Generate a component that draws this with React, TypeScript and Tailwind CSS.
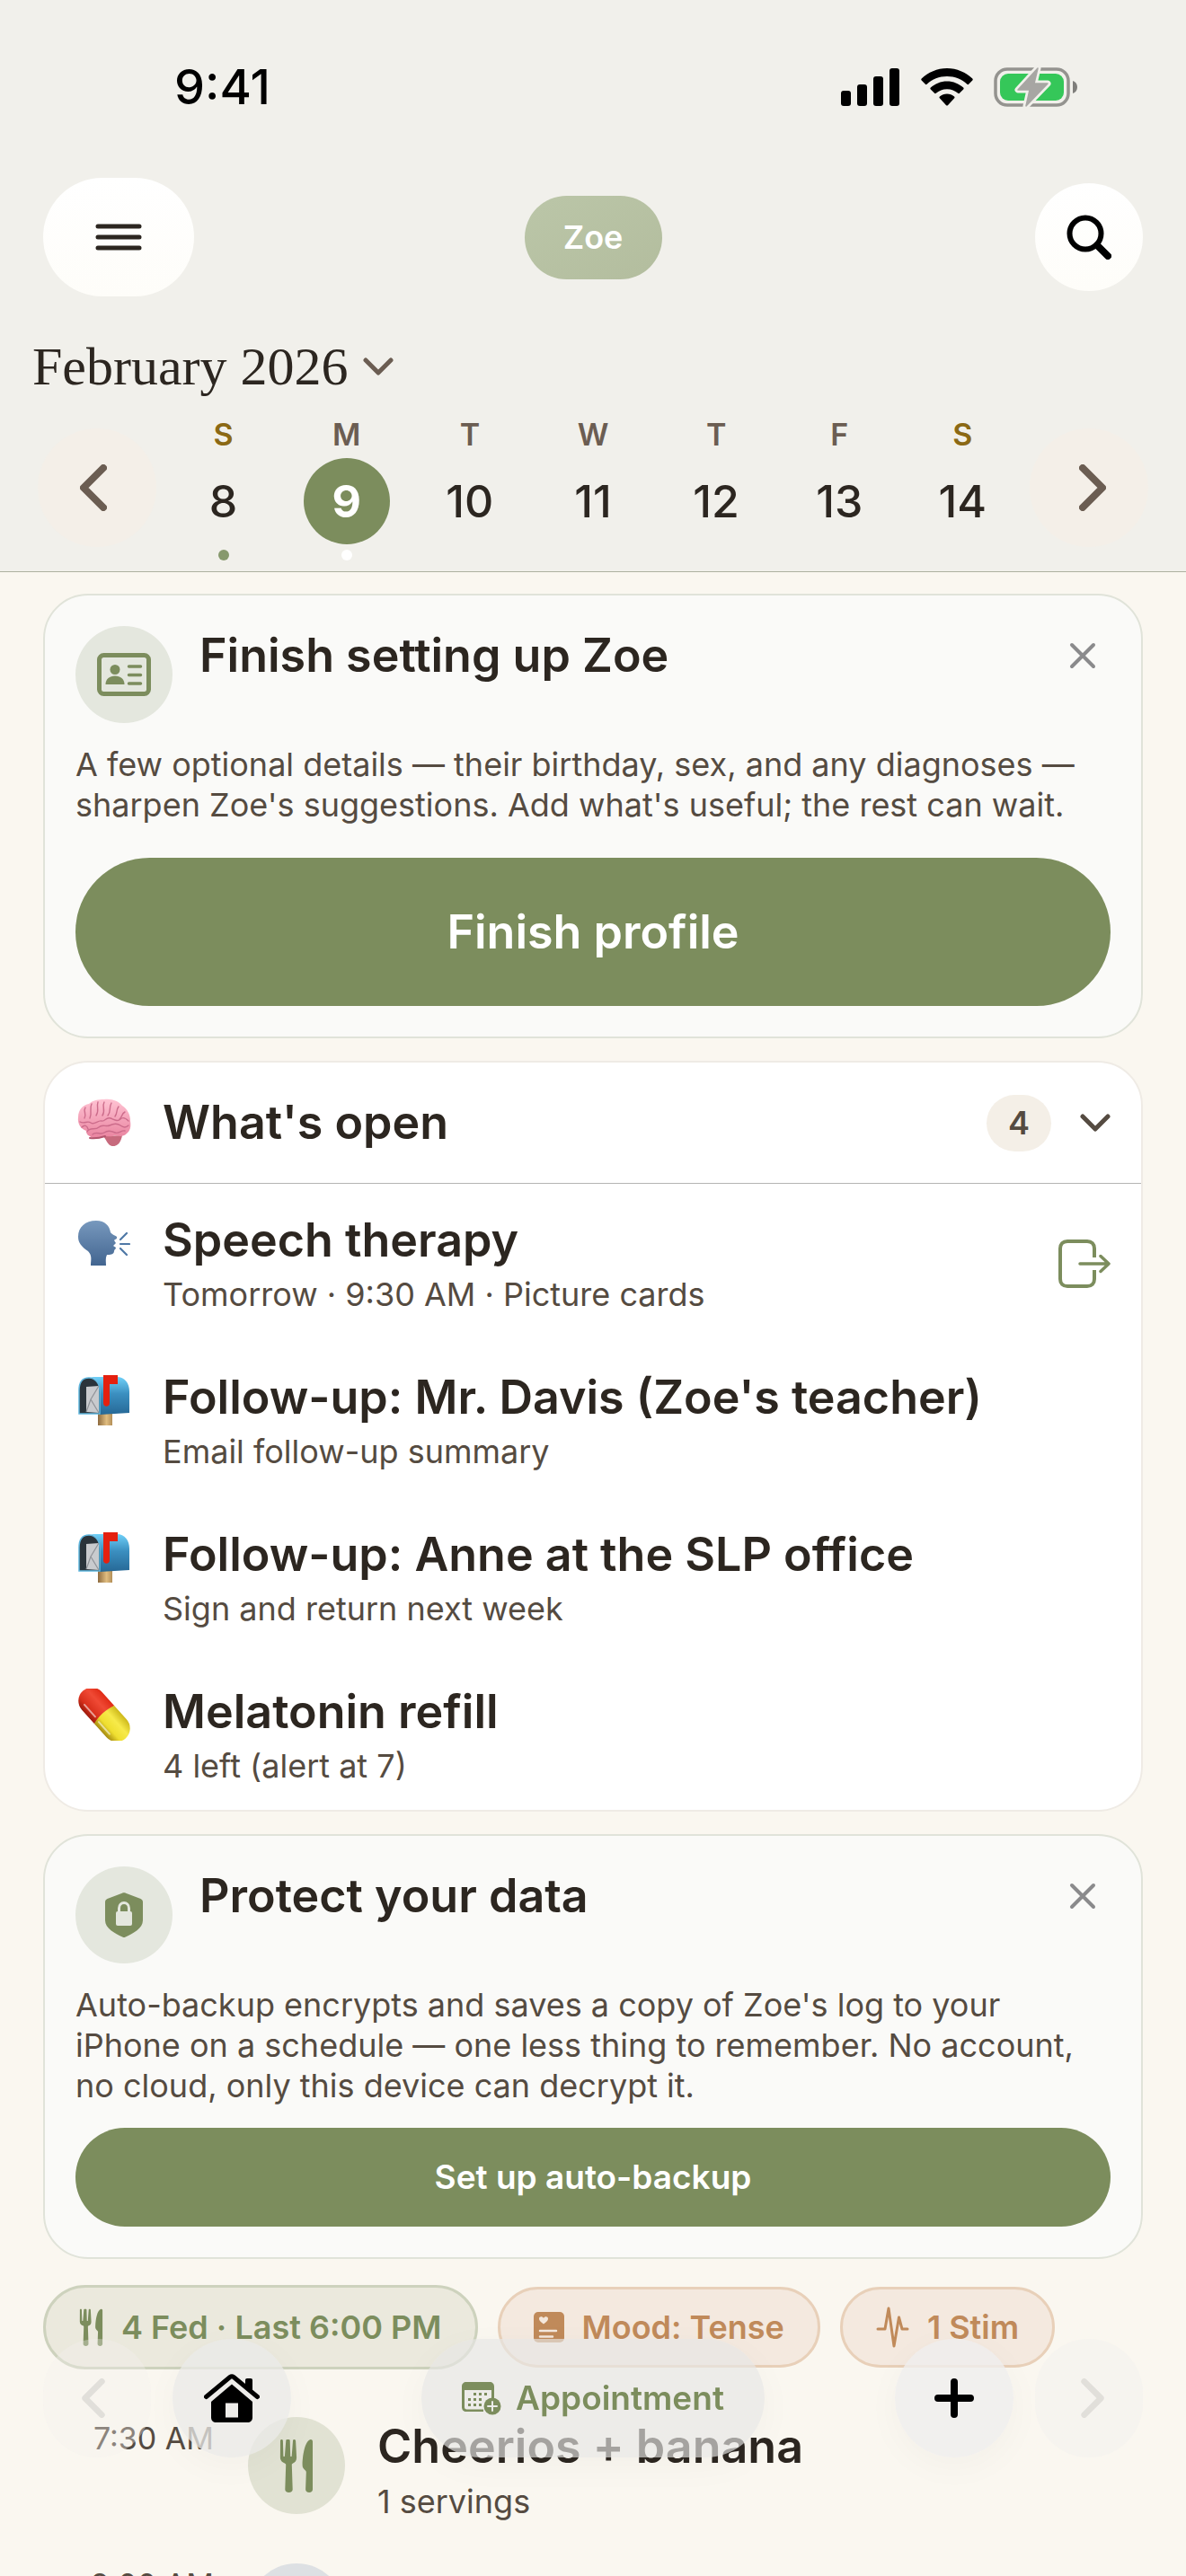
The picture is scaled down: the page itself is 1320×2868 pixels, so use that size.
import type { ReactNode } from 'react'

const days = [
  { label: 'S', date: 8, weekend: true, dot: 'bg-[#87996d]' },
  { label: 'M', date: 9, selected: true, dot: 'bg-white' },
  { label: 'T', date: 10 },
  { label: 'W', date: 11 },
  { label: 'T', date: 12 },
  { label: 'F', date: 13 },
  { label: 'S', date: 14, weekend: true },
]

const openItems = [
  { icon: <SpeakingHead />, title: 'Speech therapy', detail: 'Tomorrow · 9:30 AM · Picture cards', exit: true },
  { icon: <Mailbox />, title: "Follow-up: Mr. Davis (Zoe's teacher)", detail: 'Email follow-up summary' },
  { icon: <Mailbox />, title: 'Follow-up: Anne at the SLP office', detail: 'Sign and return next week' },
  { icon: <Pill />, title: 'Melatonin refill', detail: '4 left (alert at 7)' },
]

/* ---------- icons ---------- */

function Chevron({ d, className, width = 8 }: { d: 'left' | 'right' | 'down'; className: string; width?: number }) {
  const paths = {
    left: { box: '0 0 30 52', path: 'M26 4 4 26l22 22' },
    right: { box: '0 0 30 52', path: 'M4 4l22 22L4 48' },
    down: { box: '0 0 34 22', path: 'M3 4l14 14L31 4' },
  }
  return (
    <svg viewBox={paths[d].box} className={className} fill="none" stroke="currentColor" strokeWidth={width} strokeLinecap="round" strokeLinejoin="round">
      <path d={paths[d].path} />
    </svg>
  )
}

function Close() {
  return (
    <svg viewBox="0 0 30 30" className="h-[30px] w-[30px]" fill="none" stroke="#8a8a8c" strokeWidth="4" strokeLinecap="round">
      <path d="M3 3l24 24M27 3 3 27" />
    </svg>
  )
}

function ForkKnife({ className }: { className: string }) {
  return (
    <svg viewBox="0 0 38 60" className={className} fill="currentColor">
      <path d="M2.500 1c.9 0 1.400.6 1.400 1.500l.5 17c0 .8 1.500.8 1.500 0L7.300 2.300C7.300 1.400 7.800 1 9 1h1c1.200 0 1.700.4 1.700 1.300l.5 17.200c0 .8 1.500.8 1.500 0L15 2.500c0-.9.500-1.500 1.400-1.500 1 0 1.600.6 1.700 1.500l1 18.500c.1 3.500-1.600 5.500-4 6.500-1 .5-1.400 1-1.300 2l.9 27c0 2-1.600 3.500-4.200 3.500s-4.200-1.500-4.200-3.500l.9-27c.1-1-.3-1.500-1.300-2C3.400 26.500.8 24.500.9 21L1 2.500C1 1.600 1.500 1 2.500 1z" />
      <path d="M34.500 1c1.700-.3 2.500.8 2.500 2.500V56.500c0 2-1.500 3.500-3.900 3.500s-4-1.500-4-3.500l.7-19c0-1-.4-1.600-1.200-2.300-2.200-1.900-3.100-3.200-3-6.200C26 17 28.500 3 34.500 1z" />
    </svg>
  )
}

function StatusIcons() {
  return (
    <div className="flex items-center gap-[23px]">
      <svg viewBox="0 0 66 42" className="h-[42px] w-[66px]">
        <rect x="0" y="25" width="11" height="17" rx="3" />
        <rect x="18" y="18" width="11" height="24" rx="3" />
        <rect x="36" y="9" width="11" height="33" rx="3" />
        <rect x="54" y="0" width="11" height="42" rx="3" />
      </svg>
      <svg viewBox="0 0 58 42" className="h-[42px] w-[58px]">
        <path d="M29 0c11 0 21 4.500 28.300 11.600.6.600.6 1.300 0 1.900l-4.200 4.300c-.5.500-1.200.5-1.700 0C45.600 12.300 37.700 9 29 9S12.400 12.300 6.600 17.800c-.5.500-1.200.5-1.700 0L.7 13.500c-.6-.6-.6-1.300 0-1.900C8 4.500 18 0 29 0z" />
        <path d="M29 14.500c7 0 13.400 2.700 18.200 7.100.6.600.6 1.300 0 1.900l-4.300 4.300c-.5.500-1.100.5-1.700 0-3.200-2.900-7.500-4.600-12.200-4.600s-9 1.700-12.200 4.600c-.6.500-1.200.5-1.700 0l-4.300-4.300c-.6-.6-.6-1.300 0-1.900 4.800-4.400 11.200-7.100 18.200-7.100z" />
        <path d="M29 28.500c3.100 0 5.900 1.100 8.100 3 .6.500.6 1.200.1 1.800l-7.300 7.900c-.5.500-1.300.5-1.800 0l-7.300-7.900c-.5-.6-.5-1.300.1-1.800 2.200-1.900 5-3 8.100-3z" />
      </svg>
      <svg viewBox="0 0 94 44" className="h-11 w-[94px]">
        <rect x="2" y="2" width="81" height="40" rx="13" fill="none" stroke="#94938f" strokeWidth="3.500" />
        <rect x="7" y="7" width="71" height="30" rx="9" fill="#35c759" />
        <path d="M88 15c3 1 5 3.500 5 7s-2 6-5 7z" fill="#7f7e7b" />
        <path d="M49 1 27 25h13L36 43l24-25H45z" fill="#a7a6a3" stroke="#f1f0eb" strokeWidth="7" strokeLinejoin="round" />
        <path d="M49 1 27 25h13L36 43l24-25H45z" fill="#a7a6a3" stroke="#a7a6a3" strokeWidth="1.500" strokeLinejoin="round" />
      </svg>
    </div>
  )
}

function IdCard() {
  return (
    <svg viewBox="0 0 60 48" className="h-12 w-[60px]" fill="none" stroke="#7c8d5d">
      <rect x="2.500" y="2.500" width="55" height="43" rx="5" strokeWidth="5" />
      <circle cx="20" cy="18.500" r="5.500" fill="#7c8d5d" stroke="none" />
      <path d="M9.500 35c0-6 4.500-9.500 10.500-9.500S30.500 29 30.500 35z" fill="#7c8d5d" stroke="none" />
      <path d="M35.500 15h13M35.500 24.500h13M35.500 34h13" strokeWidth="3.500" strokeLinecap="round" />
    </svg>
  )
}

function ShieldLock() {
  return (
    <svg viewBox="0 0 42 50" className="h-[50px] w-[42px]">
      <path d="M19 .7c1.300-.6 2.700-.6 4 0L39.500 7c1.600.7 2.500 2 2.500 3.700V31c0 9-11 14.500-19.200 18.600-1.200.6-2.400.6-3.600 0C11 45.500 0 40 0 31V10.700C0 9 .9 7.700 2.500 7z" fill="#7c8d5d" />
      <rect x="12" y="21" width="18" height="16" rx="2" fill="#e4e7de" />
      <path d="M15.500 22v-4.500c0-8 11-8 11 0V22" fill="none" stroke="#e4e7de" strokeWidth="3" />
    </svg>
  )
}

function Brain() {
  return (
    <svg viewBox="0 0 64 54" className="h-[54px] w-16">
      <defs>
        <linearGradient id="brain" x1="0" y1="0" x2="0" y2="1">
          <stop offset="0" stopColor="#ffc3d3" />
          <stop offset="1" stopColor="#e9839f" />
        </linearGradient>
      </defs>
      <path d="M31 42c4 5 5 11 11 11s9-6 10-12z" fill="#c76a7d" />
      <path d="M32 1c9-1 16 2 20 7 6 4 9 10 9 17 1 6 0 11-4 14-4 4-9 3-13 2-4 2-7 1-11 1-6 3-13 4-17 0-3-1-4-3-4-6-6-2-10-8-9-15C3 12 9 7 15 6c4-4 10-5 17-5z" fill="url(#brain)" />
      <path d="M16 44c6 1 11 0 17-2" fill="none" stroke="#b3566f" strokeWidth="2" strokeLinecap="round" />
      <g fill="none" stroke="#cc6c8b" strokeWidth="1.400" strokeLinecap="round">
        <path d="M11 10c-3 5 2 7-1 12M18 6c-3 6 1 9-2 16M25 4c-2 6 2 9-2 15M32 4c-3 5 2 9-2 15M40 5c-3 5 0 9-4 14M48 9c-3 4-1 7-4 11M55 15c-4 2-3 6-6 8" />
        <path d="M5 26c5 3 8-2 12 1s8-3 12-2 5-5 10-3 8 4 11 1 6-1 9 2" />
        <path d="M7 32c3-3 6-2 7 2M13 37c3-6 9-1 13-5s8 0 12-2 8-3 12 0 7 2 9 0M19 40c4-4 9 1 13-2s8-2 12 0 7-3 11-2" />
      </g>
    </svg>
  )
}

function SpeakingHead() {
  return (
    <svg viewBox="0 0 58 50" className="h-[50px] w-[58px]">
      <defs>
        <linearGradient id="head" x1="0" y1="0" x2="0" y2="1">
          <stop offset="0" stopColor="#7798bd" />
          <stop offset="1" stopColor="#426590" />
        </linearGradient>
      </defs>
      <path d="M20 0c10 0 15 6 16 13 1 2 6 4 7 5 1 2-2 3-3 4l2 3-3 3 3 2c0 2-2 2-2 4 0 4-5 4-8 4-2 4-1 8-1 12H14c0-6 2-11-3-16C4 29 0 25 0 18 0 7 8 0 20 0z" fill="url(#head)" />
      <path d="M47 21l7-7M47 26h10M47 31l7 7" stroke="#4f78a6" strokeWidth="2.200" strokeLinecap="round" />
    </svg>
  )
}

function Mailbox() {
  return (
    <svg viewBox="0 0 58 56" className="h-14 w-[58px]">
      <defs>
        <linearGradient id="box" x1="0" y1="0" x2="0" y2="1">
          <stop offset="0" stopColor="#6fd0f8" />
          <stop offset=".45" stopColor="#3b8fc0" />
          <stop offset="1" stopColor="#266896" />
        </linearGradient>
        <linearGradient id="post" x1="0" y1="0" x2="1" y2="0">
          <stop offset="0" stopColor="#8d6a3e" />
          <stop offset=".6" stopColor="#e0bd80" />
          <stop offset="1" stopColor="#b38f58" />
        </linearGradient>
      </defs>
      <path d="M22 40h16v16H22z" fill="url(#post)" />
      <path d="M12 2h31c9 0 14 7 14 16v24l-33 2V18C24 9 20 2 12 2z" fill="url(#box)" />
      <path d="M1 43V17C1 8 5 3 12 3s12 6 12 15v25z" fill="#2b343b" stroke="#5eb5dd" strokeWidth="1.500" />
      <path d="M9 13l14-1v30l-14-1z" fill="#c9cbce" />
      <path d="M23 12 14 27l9 15M9 41l5-14" fill="none" stroke="#909398" strokeWidth="1.200" />
      <path d="M28 0h16v10h-9v21c0 5-7 5-7 0z" fill="#e4200f" />
    </svg>
  )
}

function Pill() {
  return (
    <svg viewBox="0 0 58 58" className="h-[58px] w-[58px]">
      <defs>
        <linearGradient id="red" x1="0" y1="0" x2="0" y2="1">
          <stop offset="0" stopColor="#e02b16" />
          <stop offset=".35" stopColor="#f04a35" />
          <stop offset=".75" stopColor="#d9301c" />
          <stop offset="1" stopColor="#9c1a0c" />
        </linearGradient>
        <linearGradient id="yellow" x1="0" y1="0" x2="0" y2="1">
          <stop offset="0" stopColor="#cdb81a" />
          <stop offset=".35" stopColor="#f7ea4a" />
          <stop offset=".7" stopColor="#efdf30" />
          <stop offset="1" stopColor="#a58a10" />
        </linearGradient>
      </defs>
      <g transform="rotate(48 29 29)">
        <path d="M29 14H8.500a15 15 0 0 0 0 30H29z" fill="url(#red)" />
        <path d="M29 14h20.500a15 15 0 0 1 0 30H29c-3-8-3-22 0-30z" fill="url(#yellow)" />
        <path d="M6 38h18M31 39h18" stroke="#fff" strokeOpacity=".55" strokeWidth="2" strokeLinecap="round" />
      </g>
    </svg>
  )
}

function Exit() {
  return (
    <svg viewBox="0 0 58 54" className="h-[54px] w-[58px]" fill="none" stroke="#7c8d5d" strokeWidth="4" strokeLinecap="round" strokeLinejoin="round">
      <path d="M40 20V10c0-5-3-8-8-8H10c-5 0-8 3-8 8v34c0 5 3 8 8 8h22c5 0 8-3 8-8V34" strokeLinecap="butt" />
      <path d="M24 27h31M47 18.500l9 8.500-9 8.500" strokeWidth="3.500" />
    </svg>
  )
}

function MoodCard() {
  return (
    <svg viewBox="0 0 34 34" className="h-[34px] w-[34px]">
      <rect width="34" height="34" rx="5" fill="#c08a5a" />
      <path d="M11 13.500C7.500 11 6 9.500 6 7.500 6 4.800 9.500 4.300 11 6.800c1.500-2.500 5-2 5 .7 0 2-1.500 3.500-5 6z" fill="#f4e8dd" />
      <path d="M7 21h18M7 27.500h14" stroke="#f4e8dd" strokeWidth="2.500" strokeLinecap="round" />
    </svg>
  )
}

function Pulse() {
  return (
    <svg viewBox="0 0 37 46" className="h-[46px] w-[37px]" fill="none" stroke="#c08a5a" strokeWidth="3" strokeLinecap="round" strokeLinejoin="round">
      <path d="M2 25h8L14 2l6 42 5.500-32L29 25h6" />
    </svg>
  )
}

function CalendarPlus() {
  return (
    <svg viewBox="0 0 44 37" className="h-[37px] w-11">
      <path d="M5 0h26c3 0 5 2 5 5v13h-3V9H3v19c0 1.500.8 2.500 2.500 2.500H24V33H5c-3 0-5-2-5-5V5c0-3 2-5 5-5z" fill="#7c8d5d" />
      <g fill="#7c8d5d">
        <path d="M13 12h3v3h-3zM19 12h3v3h-3zM25 12h3v3h-3zM7 18h3v3H7zM13 18h3v3h-3zM19 18h3v3h-3zM7 24h3v3H7zM13 24h3v3h-3zM19 24h3v3h-3z" />
        <circle cx="34" cy="27" r="9.500" />
      </g>
      <path d="M34 22v10M29 27h10" stroke="#ececea" strokeWidth="2" strokeLinecap="round" />
    </svg>
  )
}

function House() {
  return (
    <svg viewBox="0 0 62 54" className="h-[54px] w-[62px]">
      <path d="M2.500 25.500 29 3.500c1.300-1 2.700-1 4 0l26.500 22" fill="none" stroke="#000" strokeWidth="5" strokeLinecap="round" strokeLinejoin="round" />
      <path d="M46 7c0-1.300.7-2 2-2h4c1.300 0 2 .7 2 2v14l-8-7z" />
      <path fillRule="evenodd" d="M31 11.500 54 31v17c0 4-2 6-6 6H14c-4 0-6-2-6-6V31zM24 32.500v16h14v-16z" />
    </svg>
  )
}

/* ---------- pieces ---------- */

type PromptProps = { icon: ReactNode; title: string; children: ReactNode; action: string; large?: boolean }

function PromptCard({ icon, title, children, action, large }: PromptProps) {
  return (
    <section className="rounded-[50px] border-2 border-[#e0e3d9] bg-[#fafaf8] px-[34px] py-[34px]">
      <div className="flex items-start">
        <div className="flex h-[108px] w-[108px] shrink-0 items-center justify-center rounded-full bg-[#e4e7de]">{icon}</div>
        <h2 className="ml-[30px] flex-1 text-[52px] leading-[66px] font-semibold">{title}</h2>
        <button aria-label="Dismiss" className="mr-4 flex h-[66px] items-center">
          <Close />
        </button>
      </div>
      <p className="mt-6 text-[36px] leading-[45px] text-[#554b41]">{children}</p>
      {large ? (
        <button className="mt-9 h-[165px] w-full rounded-full bg-[#7c8d5d] text-[52px] font-semibold text-white">{action}</button>
      ) : (
        <button className="mt-6 h-[110px] w-full rounded-full bg-[#7c8d5d] text-[37px] font-semibold text-white">{action}</button>
      )}
    </section>
  )
}

function TimelineRow({ time, icon, tint, title, detail }: { time: string; icon?: ReactNode; tint: string; title?: string; detail?: string }) {
  return (
    <li className="flex h-[163px] items-start">
      <time className="w-[190px] text-right text-[34px] leading-[48px] text-[#554b41]">{time}</time>
      <div className={`ml-[38px] flex h-[108px] w-[108px] shrink-0 items-center justify-center rounded-full ${tint}`}>{icon}</div>
      <div className="ml-9">
        <h3 className="text-[52px] leading-[66px] font-semibold">{title}</h3>
        <p className="text-[36px] leading-[56px] text-[#554b41]">{detail}</p>
      </div>
    </li>
  )
}

export default function App() {
  return (
    <div className="flex h-screen flex-col overflow-hidden bg-[#faf7f0] font-['Inter',sans-serif] text-[#2c2620]">
      <header className="shrink-0 border-b border-[#adb1a0] bg-[#f1f0eb]">
        <div className="flex h-[198px] items-start justify-between pt-[64px] pr-[120px] pl-[194px] text-black">
          <span className="text-[54px] leading-[66px] font-medium">9:41</span>
          <div className="flex h-[66px] items-center">
            <StatusIcons />
          </div>
        </div>

        <div className="grid grid-cols-3 items-center px-12">
          <button aria-label="Menu" className="flex h-[132px] w-[168px] items-center justify-center rounded-[66px] bg-linear-to-b from-white to-[#fefdf9]">
            <svg viewBox="0 0 52 36" className="h-9 w-[52px]" stroke="#2c2620" strokeWidth="5" strokeLinecap="round">
              <path d="M3 6h46M3 18h46M3 30h46" />
            </svg>
          </button>
          <button className="h-[93px] w-[153px] justify-self-center rounded-full bg-linear-to-br from-[#bbc6a8] to-[#b3bd9e] text-[36px] font-semibold text-white">
            Zoe
          </button>
          <button aria-label="Search" className="flex h-[120px] w-[120px] items-center justify-center justify-self-end rounded-full bg-linear-to-b from-white to-[#fefdf9]">
            <svg viewBox="0 0 50 50" className="h-[50px] w-[50px]" fill="none" stroke="#000" strokeLinecap="round">
              <circle cx="21" cy="21" r="17.500" strokeWidth="6" />
              <path d="M34 34l12 12" strokeWidth="8" />
            </svg>
          </button>
        </div>

        <button className="mt-[42px] ml-9 flex items-center gap-4 text-[#6b5d52]">
          <span className="font-['Liberation_Serif',serif] text-[60px] leading-[72px] text-[#2c2620]">February 2026</span>
          <Chevron d="down" className="h-[22px] w-[34px]" width={5} />
        </button>

        <div className="flex items-start px-[42px] pt-[22px]">
          <button aria-label="Previous week" className="mt-[11px] flex h-[132px] w-[132px] shrink-0 items-center justify-center rounded-full bg-[#f4efe8] pr-2 text-[#6b5d52]">
            <Chevron d="left" className="h-[52px] w-[30px]" />
          </button>
          <div className="mx-[6px] grid flex-1 grid-cols-7">
            {days.map((day, i) => (
              <button key={i} className="flex flex-col items-center">
                <span className={`text-[34px] leading-[36px] font-semibold ${day.weekend ? 'text-[#8b6914]' : 'text-[#6b5d52]'}`}>{day.label}</span>
                <span className={`mt-2 flex h-24 w-24 items-center justify-center rounded-full text-[50px] ${day.selected ? 'bg-[#7c8d5d] font-bold text-white' : 'font-medium'}`}>
                  {day.date}
                </span>
                <span className={`mt-[6px] mb-3 h-3 w-3 rounded-full ${day.dot ?? ''}`} />
              </button>
            ))}
          </div>
          <button aria-label="Next week" className="mt-[11px] flex h-[132px] w-[132px] shrink-0 items-center justify-center rounded-full bg-[#f4efe8] pl-2 text-[#6b5d52]">
            <Chevron d="right" className="h-[52px] w-[30px]" />
          </button>
        </div>
      </header>

      <main className="flex min-h-0 flex-1 flex-col gap-[25px] overflow-hidden px-12 pt-6 *:shrink-0">
        <PromptCard icon={<IdCard />} title="Finish setting up Zoe" action="Finish profile" large>
          A few optional details — their birthday, sex, and any diagnoses — sharpen Zoe's suggestions. Add what's useful; the rest can wait.
        </PromptCard>

        <section className="rounded-[50px] border-2 border-[#efebe5] bg-white">
          <button className="flex h-[134px] w-full items-center px-[34px] text-left">
            <Brain />
            <h2 className="ml-[33px] flex-1 text-[52px] font-semibold">What's open</h2>
            <span className="flex h-[63px] w-[72px] items-center justify-center rounded-full bg-[#f4efe7] text-[36px] font-semibold text-[#554b41]">4</span>
            <Chevron d="down" className="ml-8 h-[22px] w-[34px] text-[#554b41]" width={5} />
          </button>
          <ul className="flex flex-col gap-[60px] border-t border-[#b5b5b3] px-[34px] pt-[31px] pb-[26px]">
            {openItems.map((item) => (
              <li key={item.title} className="flex items-start">
                <div className="flex h-[70px] w-16 items-center justify-center">{item.icon}</div>
                <div className="ml-[33px] flex-1">
                  <h3 className="text-[52px] leading-[64px] font-semibold">{item.title}</h3>
                  <p className="mt-[6px] text-[36px] leading-[45px] text-[#554b41]">{item.detail}</p>
                </div>
                {item.exit && (
                  <button aria-label="Open visit" className="flex h-[115px] items-center">
                    <Exit />
                  </button>
                )}
              </li>
            ))}
          </ul>
        </section>

        <PromptCard icon={<ShieldLock />} title="Protect your data" action="Set up auto-backup">
          Auto-backup encrypts and saves a copy of Zoe's log to your iPhone on a schedule — one less thing to remember. No account, no cloud, only this device can decrypt it.
        </PromptCard>

        <div className="mt-1 flex items-center gap-[22px] text-[36px] font-semibold whitespace-nowrap">
          <button className="flex h-[94px] items-center gap-5 rounded-full border-3 border-[#cdd2bd] bg-[#ebe9dd] px-[37px] text-[#7c8d5d]">
            <ForkKnife className="h-[42px] w-[27px]" />
            4 Fed · Last 6:00 PM
          </button>
          <button className="flex h-[90px] items-center gap-5 rounded-full border-3 border-[#e8d0b9] bg-[#f4e9df] px-[37px] text-[#c08a5a]">
            <MoodCard />
            Mood: Tense
          </button>
          <button className="flex h-[90px] items-center gap-5 rounded-full border-3 border-[#e8d0b9] bg-[#f4e9df] px-[37px] text-[#c08a5a]">
            <Pulse />
            1 Stim
          </button>
        </div>

        <ul className="mt-[28px]">
          <TimelineRow
            time="7:30 AM"
            icon={<ForkKnife className="h-[60px] w-[38px] text-[#7c8d5d]" />}
            tint="bg-[#e1e2d3]"
            title="Cheerios + banana"
            detail="1 servings"
          />
          <TimelineRow time="8:00 AM" tint="bg-[#dde0e3]" />
        </ul>
      </main>

      {/* Floating dock */}
      <nav className="fixed inset-x-0 bottom-[132px] flex items-center justify-between px-12">
        <div className="flex gap-6">
          <button aria-label="Previous day" className="flex h-[132px] w-[120px] items-center justify-center rounded-[60px] bg-[#f3f2ee]/35 pr-2 text-[#e1dfda]">
            <Chevron d="left" className="h-11 w-[26px]" />
          </button>
          <button aria-label="Home" className="flex h-[132px] w-[132px] items-center justify-center rounded-full bg-[#e9e9e8]/75 shadow-[0_10px_40px_rgba(0,0,0,0.03)]">
            <House />
          </button>
        </div>
        <button className="flex h-[132px] items-center gap-4 rounded-full bg-[#e7e7e5]/65 px-[45px] text-[37px] font-semibold text-[#7c8d5d] shadow-[0_10px_40px_rgba(0,0,0,0.03)]">
          <CalendarPlus />
          Appointment
        </button>
        <div className="flex gap-6">
          <button aria-label="Add entry" className="flex h-[132px] w-[132px] items-center justify-center rounded-full bg-[#efeeed]/80 shadow-[0_10px_40px_rgba(0,0,0,0.03)]">
            <svg viewBox="0 0 44 44" className="h-11 w-11" stroke="#000" strokeWidth="8" strokeLinecap="round">
              <path d="M22 4v36M4 22h36" />
            </svg>
          </button>
          <button aria-label="Next day" className="flex h-[132px] w-[120px] items-center justify-center rounded-[60px] bg-[#f3f2ee]/60 pl-2 text-[#e1dfda]">
            <Chevron d="right" className="h-11 w-[26px]" />
          </button>
        </div>
      </nav>
    </div>
  )
}
